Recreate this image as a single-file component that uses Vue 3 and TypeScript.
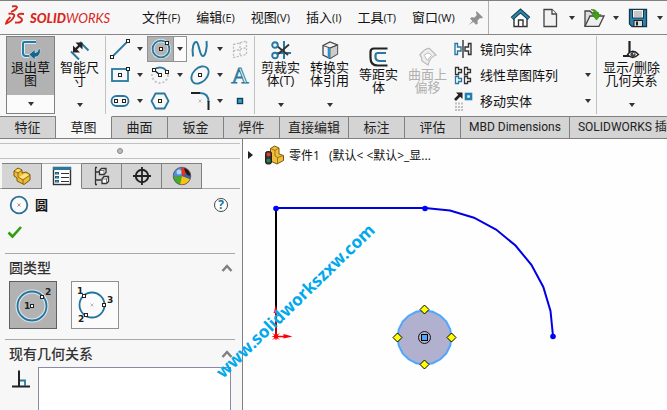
<script setup lang="ts">
import { ref } from 'vue'

type Tool = { icon: string; label: string; drop?: boolean; active?: boolean }
type BigTool = { icon: string; label: string; drop?: boolean; active?: boolean; disabled?: boolean }

const menus = [
  ['文件', 'F'], ['编辑', 'E'], ['视图', 'V'], ['插入', 'I'], ['工具', 'T'], ['窗口', 'W'],
]

const sq = (x: number, y: number) =>
  `<rect x="${x - 1.5}" y="${y - 1.5}" width="3" height="3" fill="#fff" stroke="#222"/>`
const blue = 'stroke="#2878a0" stroke-width="1.8" fill="none"'
const darkThin = 'stroke="#333" stroke-width="1.4" fill="none"'

const icons: Record<string, string> = {
  pin: '<g fill="#909090"><path d="M10.5 3 17 9.500l-1.800.9-1.200-.4-2.500 2.700.2 3-1.600 1L4 10.500l1.600-1.200 3 .2 2.300-2.700-.9-1.600z"/><path d="M7.500 12 2.500 17l6-3.800z"/></g>',
  home: '<path d="M4 10v8.500h13V10l-6.500-6z" fill="#fff" stroke="#333" stroke-width="1.400"/><path d="M8.500 18v-6h4.500v6" fill="#fff" stroke="#333" stroke-width="1.400"/><path d="M2 10.500 10.500 3 19 10.500" fill="none" stroke="#123f55" stroke-width="4"/><path d="M2.300 10.200 10.500 3 18.700 10.200" fill="none" stroke="#2f86ad" stroke-width="2"/>',
  page: '<path d="M4 1.500h8l4.500 4.500v12.500H4z" fill="#f2f2f2" stroke="#444" stroke-width="1.300"/><path d="M12 1.500V6h4.500" fill="#fff" stroke="#444" stroke-width="1.300"/>',
  open: '<path d="M1 18V3h5l2 2h6v4" fill="#ddd" stroke="#444" stroke-width="1.300"/><path d="M1 18.300 6 8h14l-5 10.300z" fill="#eee" stroke="#444" stroke-width="1.300"/><path d="M7 1.500c4-.5 6.500 1.500 7 5h3L12.500 12 8 6.500h3C10.500 4 9.500 2.800 7 1.500z" fill="#3fa510" stroke="#2d7d0a" stroke-width=".6"/>',
  save: '<path d="M1.500 1.500h17v17H4L1.500 16z" fill="#2b84ad" stroke="#16384a" stroke-width="1.300"/><rect x="4.500" y="1.500" width="11" height="8.500" fill="#f4f4f4" stroke="#16384a"/><path d="M6 4h8M6 6h8M6 8h8" stroke="#999"/><rect x="6" y="12.500" width="8.500" height="6" fill="#ddd" stroke="#222"/><rect x="8" y="13.500" width="2" height="4" fill="#222"/>',
  exit: '<path d="M15 2H3.500q-1.500 0-1.500 1.500V13q0 3 3 3h3" fill="none" stroke="#dfeaf0" stroke-width="4"/><path d="M15 2H3.500q-1.500 0-1.500 1.500V13q0 3 3 3h3" fill="none" stroke="#257ba5" stroke-width="2"/><path d="M8 14.500 14 9.500v3.200q3 0 3.500-3.700h2q0 8-5.500 8v3z" fill="#17648c" stroke="#cfe0e8" stroke-width=".6"/>',
  dimension: '<path d="M1 11.500 9 19.500M10 2l8.500 8.500" stroke="#2878a0" stroke-width="2"/><path d="m5 10 5-5" stroke="#222" stroke-width="2.400"/><path d="M3 5.500V12.500h7zM5.500 2.500h7v7z" fill="#222"/>',
  line: `<path d="M2 18 18 2" ${blue}/>${sq(2, 18)}${sq(18, 2)}`,
  circle: `<circle cx="10" cy="10" r="8.400" fill="none" stroke="#dce8ee" stroke-width="3.600"/><circle cx="10" cy="10" r="8.400" ${blue}/>${sq(10, 10)}${sq(16, 4)}`,
  spline: `<path d="M3 17.500C1.500 8 4 2.500 6.500 3s3 13.500 6 14S17.500 8 16.500 2" stroke="#2878a0" stroke-width="2" fill="none"/>`,
  plane: '<path d="M3.500 5.500 16.500 2v13.500L3.500 18.500zM10 3.500v14M3.500 12 16.500 8.500" fill="none" stroke="#bbb" stroke-width="1.300" stroke-dasharray="2 1.500"/>',
  rect: `<rect x="2" y="4" width="16" height="12" ${blue}/>${sq(10, 10)}${sq(18, 4)}`,
  arc: `<circle cx="10" cy="10" r="8" fill="none" stroke="#c4c4c4" stroke-width="2" stroke-dasharray="2 2"/><path d="M4 5A8 8 0 0 1 17 7" stroke="#f7f7f7" stroke-width="4" fill="none"/><path d="M4 5A8 8 0 0 1 17 7" ${blue}/><path d="m4 5 6 5" stroke="#222" stroke-width="1.600"/>${sq(4, 5)}${sq(17, 7)}${sq(10, 10)}`,
  ellipse: `<ellipse cx="10" cy="10" rx="10" ry="7" transform="rotate(-45 10 10)" ${blue}/>${sq(10, 10)}`,
  text: '<text x="10" y="17.500" text-anchor="middle" font-family="Liberation Serif, serif" font-size="24" fill="#f7f7f7" stroke="#2878a0" stroke-width="1">A</text>',
  slot: `<rect x="1.500" y="5" width="17" height="10" rx="5" ${blue}/>${sq(6, 10)}${sq(14, 10)}`,
  polygon: `<path d="M5.500 2.500h9l4 7.500-4 7.500h-9L1.500 10z" ${blue}/>${sq(10, 10)}`,
  fillet: '<path d="M1 2h9" stroke="#222" stroke-width="2"/><path d="M10 2q8.500 0 8.500 9" fill="none" stroke="#2878a0" stroke-width="2"/><path d="M18.500 10v9" stroke="#222" stroke-width="2"/><path d="m8.500 8.500 3 3m0-3-3 3" stroke="#bbb"/>',
  point: '<rect x="7.500" y="7.500" width="5" height="5" fill="#3fa0cc" stroke="#123f55" stroke-width="1.400"/>',
  trim: '<path d="M13 1v18M5 13h15" stroke="#2878a0" stroke-width="2"/><path d="M6 6 17 15M6 15 18 4.500" stroke="#333" stroke-width="1.800"/><circle cx="4" cy="5" r="2.800" fill="none" stroke="#2878a0" stroke-width="1.900"/><circle cx="4" cy="15.500" r="2.800" fill="none" stroke="#2878a0" stroke-width="1.900"/>',
  convert: '<path d="M3 5.500 10 2l7.500 3v9L10 18.500l-7-3.500z" fill="#f2f2f2" stroke="#444" stroke-width="1.300"/><path d="M10 8v10.500l7.500-4.500V5z" fill="#ccc" stroke="#666"/><path d="m3 5.500 7 2.500 7.500-3" fill="none" stroke="#444"/><path d="M8.800 8v10" stroke="#2590c8" stroke-width="2.200"/>',
  offset: '<path d="M18.500 1.500H5q-3.500 0-3.500 3.500v6q0 7.500 7.500 7.500h9.500" fill="none" stroke="#222" stroke-width="2.200"/><path d="M17 6H9q-2.500 0-2.500 2.500V10q0 4 4.500 4h6" fill="none" stroke="#2878a0" stroke-width="2.200"/>',
  surface: '<path d="M2 8q5-7 9.500-6.500L18 8q-6 2-8 10L4 14q0-4-2-6z" fill="#eee" stroke="#bbb" stroke-width="1.300"/><path d="M6 8.500q3-3 5-2.500l2.500 2.500q-3 2-3.500 5L8 12q0-2-2-3.500z" fill="#fff" stroke="#bbb"/>',
  mirror: `<path d="M2 4.500h2.500V8H8v4H4.500v3.500H2z" stroke="#2878a0" stroke-width="1.400" fill="#fff"/><path d="M10 1v18" ${darkThin}/><path d="M18 4.500h-2.500V8H12v4h3.500v3.500H18z" ${darkThin}/>`,
  pattern: '<g fill="#fff" stroke-width="1.300"><path d="M2.500 2.500h3v2h3v3h-3v2h-3zM11.500 2.500h3v2h3v3h-3v2h-3zM11.500 11.500h3v2h3v3h-3v2h-3z" stroke="#333"/><path d="M2.500 11.500h3v2h3v3h-3v2h-3z" stroke="#2878a0"/></g>',
  move: '<path d="M2 9 7 4" stroke="#222" stroke-width="2.600"/><path d="M3 1.500h6.500V8z" fill="#222"/><rect x="13" y="3" width="5" height="5" fill="#fff" stroke="#2080b0" stroke-width="2.600"/><path d="M2 12.500h8M2 16h8M2 19h8" stroke="#c0c0c0" stroke-width="2" stroke-dasharray="2 1"/>',
  relations: '<path d="M7.500 1v15M1 16h7" stroke="#222" stroke-width="2.200"/><path d="M5.500 14.500q5-6.500 11 0-6 6-11 0z" fill="#fff" stroke="#222" stroke-width="1.300"/><circle cx="11" cy="14.500" r="2.600" fill="#444"/><circle cx="11.700" cy="13.800" r=".8" fill="#fff"/>',
  part: '<path d="M2 5 6 2l4 2v3l4-1 4 2.500V14l-6 4.500L5 15V12L2 10z" fill="#eebc38" stroke="#7a5808"/><path d="m2 5 4 2 4-3M6 7v4l5 3 7-5M11 14v4" fill="none" stroke="#7a5808" stroke-width=".8"/><path d="m3 5 3-2 3 1-3 2zM7 11l6-3.500 4 1.500-6 4z" fill="#ffe27a"/>',
  props: '<rect x="1.500" y="1.500" width="17" height="17" fill="#fff" stroke="#333" stroke-width="1.400"/><path d="M1 2.500h18" stroke="#2878a0" stroke-width="3"/><g fill="#7fc0e0" stroke="#1d5f80"><rect x="3.500" y="6.500" width="3" height="1.500"/><rect x="3.500" y="10.500" width="3" height="1.500"/><rect x="3.500" y="14.500" width="3" height="1.500"/></g><path d="M9 7.500h8M9 11.500h8M9 15.500h8" stroke="#333" stroke-width="1.200"/>',
  config: '<path d="M3 1.500h2M3 18.500h2M3.500 2v16M3.500 6h6M3.500 14h6" stroke="#333" stroke-width="1.300" fill="none"/><path d="M7.500 4.500l2-2h4.500v4l-2 2h-4.500zM10 13l2-2.500h4.500v5l-2 2H10z" fill="#fff" stroke="#333" stroke-width="1.300"/><path d="M7.500 4.500h4.500v4m0-4 2-2M10 13h4.500v4.500m0-4.500 2-2.500" fill="none" stroke="#555" stroke-width=".8"/>',
  target: '<circle cx="10" cy="10" r="6.200" fill="none" stroke="#222" stroke-width="2"/><path d="M10 1v18M1 10h18" stroke="#222" stroke-width="1.800"/>',
  appearance: '<circle cx="10" cy="10" r="8.800" fill="#e33223"/><path d="M10 10 1.300 11A8.800 8.800 0 0 1 9 1.300z" fill="#4a90d8"/><path d="M10 10 1.300 11A8.800 8.800 0 0 0 8 18.500z" fill="#3fae2a"/><path d="M10 10 8 18.500A8.800 8.800 0 0 0 18 13z" fill="#f2c517"/><path d="M10 10 18 13A8.800 8.800 0 0 0 18 6z" fill="#3566b0"/><path d="M12 2q5 1 6.500 7-2 2-4-1T12 2z" fill="#1c1c1c"/><circle cx="7" cy="6" r="2.500" fill="#fff" opacity=".6"/><circle cx="10" cy="10" r="8.800" fill="none" stroke="#555" stroke-width=".7"/>',
  circleX: '<circle cx="10" cy="10" r="8.300" fill="#fafafa" stroke="#2a6f95" stroke-width="1.800"/><path d="m8.500 8.500 3 3m0-3-3 3" stroke="#999"/>',
  light: '<path d="m6.500 3.500 4-2.500 4.500 2v6l4.500 1.500v5L13 19l-6.500-3z" fill="#f0be3c" stroke="#7a5808"/><path d="m6.500 3.500 4.500 2 4-2.500M11 5.500V11l2.500 1.500 6-2M13.500 12.500V19" fill="none" stroke="#8a6410" stroke-width=".8"/><rect x="1.500" y="6.500" width="6" height="12.500" rx="2" fill="#333" stroke="#222"/><circle cx="4.500" cy="9.500" r="2" fill="#e33"/><circle cx="4.500" cy="15.500" r="2" fill="#284"/>',
  perp: '<path d="M8 1.500v16M1 17.500h18" stroke="#222" stroke-width="2"/><path d="M9 11.500h5V17" fill="none" stroke="#2878a0" stroke-width="1.800"/>',
}

const quick = [
  { icon: 'home', label: '主页', drop: false },
  { icon: 'page', label: '新建', drop: true },
  { icon: 'open', label: '打开', drop: true },
  { icon: 'save', label: '保存', drop: true },
]

const firstTools: BigTool[] = [
  { icon: 'exit', label: '退出草\n图', drop: true, active: true },
  { icon: 'dimension', label: '智能尺\n寸', drop: true },
]
const sketchTools: Tool[] = [
  { icon: 'line', label: '直线', drop: true },
  { icon: 'circle', label: '圆', drop: true, active: true },
  { icon: 'spline', label: '样条曲线', drop: true },
  { icon: 'plane', label: '基准面' },
  { icon: 'rect', label: '矩形', drop: true },
  { icon: 'arc', label: '圆弧', drop: true },
  { icon: 'ellipse', label: '椭圆', drop: true },
  { icon: 'text', label: '文字' },
  { icon: 'slot', label: '槽口', drop: true },
  { icon: 'polygon', label: '多边形' },
  { icon: 'fillet', label: '圆角', drop: true },
  { icon: 'point', label: '点' },
]
const editTools: BigTool[] = [
  { icon: 'trim', label: '剪裁实\n体(T)', drop: true },
  { icon: 'convert', label: '转换实\n体引用', drop: true },
  { icon: 'offset', label: '等距实\n体' },
  { icon: 'surface', label: '曲面上\n偏移', disabled: true },
]
const rowTools: Tool[] = [
  { icon: 'mirror', label: '镜向实体' },
  { icon: 'pattern', label: '线性草图阵列', drop: true },
  { icon: 'move', label: '移动实体', drop: true },
]
const lastTools: BigTool[] = [{ icon: 'relations', label: '显示/删除\n几何关系', drop: true }]
const groups = { first: firstTools, edit: editTools, last: lastTools }

const tabs = ['特征', '草图', '曲面', '钣金', '焊件', '直接编辑', '标注', '评估', 'MBD Dimensions', 'SOLIDWORKS 插件']
const activeTab = ref('草图')

const panelTabs = [
  { icon: 'part', label: '设计树' },
  { icon: 'props', label: '属性' },
  { icon: 'config', label: '配置' },
  { icon: 'target', label: '尺寸专家' },
  { icon: 'appearance', label: '外观' },
]
const activePanel = ref('props')
const circleType = ref('center')

// Curves are tessellated into straight segments, like the modeller's own display.
const ring = (cx: number, cy: number, r: number, from: number, to: number, n: number) =>
  Array.from({ length: n + 1 }, (_, i) => {
    const a = ((from + ((to - from) * i) / n) * Math.PI) / 180
    return `${(cx + r * Math.sin(a)).toFixed(1)},${(cy - r * Math.cos(a)).toFixed(1)}`
  }).join(' ')
const arcPoints = ring(182, 197, 128, 0, 90, 8)
const circlePoints = ring(181.5, 198.5, 27, 0, 360, 20)
const handles = [[181.5, 170.5], [208.5, 198.5], [181.5, 225.5], [154.5, 198.5]]
</script>

<template>
  <div class="app">
    <header class="menubar">
      <div class="brand" aria-label="SOLIDWORKS">
        <svg class="ds" viewBox="0 0 20 21" fill="none" stroke="#d8261c" stroke-width="1.900">
          <path d="M7 1.500q5-1 5 .8Q11.500 4.500 6 7" />
          <path d="M3.500 8.800Q10.500 8 9 11.500 7 16.500 1 18.500q1-3.500 4.500-6.500" />
          <path d="M19 9q-6-1-6 1.500c0 2 4.500 2 4 4.500-.5 2.500-3 3-7 2.500" />
        </svg>
        <span class="word"><b>SOLID</b><i>WORKS</i></span>
      </div>
      <nav class="menus">
        <button v-for="[name, key] in menus" :key="key" type="button">{{ name }}<small>({{ key }})</small></button>
      </nav>
      <button type="button" class="pin" aria-label="固定"><svg class="icon" viewBox="0 0 20 20" v-html="icons.pin" /></button>
      <div class="quick">
        <template v-for="q in quick" :key="q.icon">
          <button type="button" :aria-label="q.label"><svg class="icon" viewBox="0 0 20 20" v-html="icons[q.icon]" /></button>
          <button v-if="q.drop" type="button" class="more" :aria-label="q.label + '选项'"><i class="caret" /></button>
        </template>
      </div>
    </header>

    <section class="ribbon">
      <template v-for="(list, name) in groups" :key="name">
        <div class="bigs" :class="name">
          <div v-for="t in list" :key="t.icon" class="big" :class="{ active: t.active, nodrop: !t.drop }">
            <button type="button" class="face" :disabled="t.disabled">
              <svg class="icon" viewBox="0 0 20 20" v-html="icons[t.icon]" />
              <span>{{ t.label }}</span>
            </button>
            <button v-if="t.drop" type="button" class="drop" aria-label="选项"><i class="caret" /></button>
          </div>
        </div>
        <div v-if="name === 'first'" class="grid">
          <div v-for="t in sketchTools" :key="t.icon" class="cell" :class="{ active: t.active }">
            <button type="button" class="tool" :aria-label="t.label"><svg class="icon" viewBox="0 0 20 20" v-html="icons[t.icon]" /></button>
            <button v-if="t.drop" type="button" class="arrow" :aria-label="t.label + '选项'"><i class="caret" /></button>
          </div>
        </div>
        <div v-if="name === 'edit'" class="rows">
          <div v-for="t in rowTools" :key="t.icon" class="row">
            <button type="button" class="rowface"><svg class="icon" viewBox="0 0 20 20" v-html="icons[t.icon]" />{{ t.label }}</button>
            <button v-if="t.drop" type="button" class="arrow" :aria-label="t.label + '选项'"><i class="caret" /></button>
          </div>
        </div>
      </template>
    </section>

    <nav class="tabs">
      <button v-for="t in tabs" :key="t" type="button" :class="{ on: t === activeTab }" @click="activeTab = t">{{ t }}</button>
    </nav>

    <main class="main">
      <aside class="panel">
        <div class="grip"><i /></div>
        <div class="ptabs">
          <button v-for="p in panelTabs" :key="p.icon" type="button" :aria-label="p.label" :class="{ on: p.icon === activePanel }" @click="activePanel = p.icon">
            <svg class="icon" viewBox="0 0 20 20" v-html="icons[p.icon]" />
          </button>
        </div>
        <div class="title">
          <svg class="icon" viewBox="0 0 20 20" v-html="icons.circleX" />
          <h1>圆</h1>
          <button type="button" class="help" aria-label="帮助">?</button>
        </div>
        <button type="button" class="ok" aria-label="确定">
          <svg viewBox="0 0 16 14"><path d="M1.500 7.500 5.500 11.500 14 2" fill="none" stroke="#2f9e0c" stroke-width="2.600" /></svg>
        </button>
        <section class="group">
          <h2>圆类型<svg viewBox="0 0 12 8"><path d="m1.500 7 4.500-5 4.500 5" /></svg></h2>
          <div class="types">
            <label :class="{ on: circleType === 'center' }">
              <input v-model="circleType" type="radio" name="circle" value="center" aria-label="圆" />
              <svg viewBox="0 0 46 46">
                <circle cx="22" cy="24" r="14.500" fill="none" stroke="#dde8ee" stroke-width="4" />
                <circle cx="22" cy="24" r="14.500" fill="none" stroke="#26749c" stroke-width="1.800" />
                <g v-html="sq(22, 24) + sq(32, 15)" />
                <text x="14" y="27">1</text><text x="35" y="13">2</text>
              </svg>
            </label>
            <label :class="{ on: circleType === 'perimeter' }">
              <input v-model="circleType" type="radio" name="circle" value="perimeter" aria-label="周边圆" />
              <svg viewBox="0 0 46 46">
                <circle cx="20" cy="23" r="12.500" fill="none" stroke="#26749c" stroke-width="1.800" />
                <path d="m18.500 21.500 3 3m0-3-3 3" stroke="#bbb" />
                <g v-html="sq(12, 14) + sq(32, 23) + sq(14, 33)" />
                <text x="5" y="12">1</text><text x="35" y="21">3</text><text x="6" y="40">2</text>
              </svg>
            </label>
          </div>
        </section>
        <section class="group grow">
          <h2><label for="relations">现有几何关系</label><svg viewBox="0 0 12 8"><path d="m1.500 7 4.500-5 4.500 5" /></svg></h2>
          <div class="relations">
            <svg class="icon" viewBox="0 0 20 20" v-html="icons.perp" />
            <select id="relations" size="4"></select>
          </div>
        </section>
      </aside>

      <section class="canvas">
        <div class="tree">
          <button type="button" aria-label="展开" class="expand" />
          <svg class="icon" viewBox="0 0 20 20" v-html="icons.light" />
          <span>零件1</span><span>(默认&lt;&nbsp;&lt;默认&gt;_显...</span>
        </div>
        <svg class="sketch" width="424" height="271">
          <g fill="none">
            <path d="M33 69v128" stroke="#000" stroke-width="2" />
            <path d="M33 69h149" stroke="#0000e6" stroke-width="2" />
            <polyline :points="arcPoints" stroke="#0000e6" stroke-width="2" />
          </g>
          <g fill="#0000ff"><circle cx="33" cy="69.500" r="2.800" /><circle cx="182" cy="69.500" r="2.800" /><circle cx="310" cy="197.500" r="2.800" /></g>
          <g stroke="#f00" fill="#f00">
            <path d="M33 197v-26M33 197.500h10" stroke-width="1.500" />
            <path d="m33 166-2.500 8h4zM49.500 197.500l-9-2.500v4.500z" stroke="none" />
            <path d="m30 194.500 6 6m0-6-6 6M29.500 197.500h7M33 194v7" />
            <rect x="31" y="195.500" width="4" height="4" stroke="none" />
          </g>
          <polygon :points="circlePoints" fill="#b2b0cf" stroke="#4da6ff" stroke-width="2" />
          <path v-for="[x, y] in handles" :key="`${x}-${y}`" :d="`M${x} ${y - 4.5}l4.500 4.500-4.500 4.500-4.500-4.500z`" fill="#ff0" stroke="#000" />
          <circle cx="181.500" cy="198.500" r="6" fill="none" stroke="#111" />
          <rect x="178.500" y="195.500" width="6" height="6" fill="#4da6ff" stroke="#000" />
        </svg>
      </section>

      <svg class="watermark" width="420" height="270" aria-hidden="true">
        <text x="0" y="0" transform="translate(223 240) rotate(-44)">www.solidworkszxw.com</text>
      </svg>
    </main>
  </div>
</template>

<style>
body { margin: 0; overflow: hidden; }
</style>

<style scoped>
* { box-sizing: border-box; }
.app {
  display: flex;
  flex-direction: column;
  height: 100vh;
  background: #f7f7f7;
  color: #111;
  font: 13px/13px "Open Sans", "Noto Sans CJK SC", sans-serif;
  overflow: hidden;
}
button { border: 0; padding: 0; margin: 0; background: none; color: inherit; font: inherit; }
.icon { display: block; flex: none; width: 20px; height: 20px; overflow: visible; }
.caret { display: block; border: 3px solid transparent; border-top: 4px solid #333; border-bottom: 0; }

.menubar { display: flex; flex: none; align-items: center; height: 35px; border-top: 1px solid #808080; border-bottom: 1px solid #868686; }
.brand { display: flex; flex: none; align-items: center; width: 134px; padding-left: 5px; color: #d8261c; }
.ds { width: 20px; height: 21px; margin-right: 5px; margin-bottom: 4px; }
.word { font: italic 13px/16px Lato, sans-serif; }
.word b { font-weight: 900; }
.menus { display: flex; flex: none; width: 332px; }
.menus button { flex: none; padding: 0 8px; line-height: 20px; white-space: nowrap; }
.menus small { font-size: 11px; }
.pin { flex: none; }
.quick { display: flex; align-items: center; height: 33px; margin-left: 2px; padding-left: 21px; border-left: 1px solid #b0b0b0; }
.quick button { flex: none; }
.quick .more { display: grid; place-items: center; width: 24px; height: 20px; }
.quick button:first-child { margin-right: 10px; }

.ribbon { display: flex; flex: none; height: 81px; padding: 1px 0 2px; overflow: hidden; }
.bigs { display: flex; flex: none; }
.bigs.first { padding-left: 6px; padding-right: 1px; border-right: 1px solid #c0c0c0; }
.bigs.edit { padding-left: 1px; border-left: 1px solid #c0c0c0; }
.bigs.last { border-left: 1px solid #c0c0c0; }
.big { display: flex; flex-direction: column; width: 49px; }
.last .big { width: 69px; }
.face { display: flex; flex-direction: column; align-items: center; height: 59px; padding-top: 4px; }
.face span { padding-top: 1px; white-space: pre; text-align: center; }
.face:disabled { color: #b0b0b0; }
.nodrop .face { padding-top: 11px; }
.drop { display: grid; place-items: center; flex: 1; }
.big.active { border: 1px solid #808080; }
.active .face { background: #b2b2b2; height: 58px; padding-top: 3px; }
.active .drop { background: #fbfbfb; }
.grid { display: grid; flex: none; grid-template-columns: repeat(4, 40px); grid-auto-rows: 26px; width: 148px; padding-left: 1px; }
.cell { display: flex; width: 39px; height: 26px; }
.tool { display: grid; place-items: center; width: 26px; }
.arrow { display: grid; place-items: center; width: 13px; }
.cell.active { border: 1px solid #909090; width: 40px; }
.cell.active .tool { background: #b2b2b2; width: 25px; }
.cell.active .arrow { background: #fbfbfb; border-left: 1px solid #909090; }
.rows { display: grid; flex: none; grid-auto-rows: 26px; width: 144px; }
.row { display: flex; justify-content: space-between; padding-left: 1px; padding-right: 2px; }
.rowface { display: flex; align-items: center; gap: 7px; }

.tabs { display: flex; flex: none; height: 23px; border-bottom: 1px solid #808080; overflow: hidden; }
.tabs button { flex: none; min-width: 56px; padding: 0 14px; background: #d4d4d4; border-top: 1px solid #808080; border-right: 1px solid #808080; white-space: nowrap; color: #222; }
.tabs button:nth-child(n + 6) { padding: 0 8px; }
.tabs button:nth-child(n + 9) { font-family: Roboto, "Noto Sans CJK SC", sans-serif; font-size: 12px; }
.tabs .on { background: #f7f7f7; border-top-color: #f7f7f7; }

.main { position: relative; display: flex; flex: 1; min-height: 0; }
.panel { display: flex; flex: none; flex-direction: column; width: 243px; padding-top: 4px; border-right: 1px solid #808080; }
.grip { display: grid; place-items: center; flex: none; height: 16px; margin-right: 2px; border-top: 1px solid #c0c0c0; border-bottom: 1px solid #c0c0c0; }
.grip i { width: 6px; height: 6px; border: 1px solid #888; border-radius: 50%; background: #bbb; }
.ptabs { display: flex; flex: none; height: 30px; margin-right: 2px; padding: 4px 0 0 2px; box-shadow: inset 0 -1px #a8a8a8; }
.ptabs button { display: grid; place-items: center; width: 40px; background: #d4d4d4; border: 1px solid #808080; border-left: 0; }
.ptabs .on { background: #f7f7f7; border-top-color: #a8a8a8; border-bottom-color: #f7f7f7; }
.title { display: flex; flex: none; align-items: center; height: 32px; padding: 0 14px 0 9px; }
h1 { flex: 1; margin: 0; padding-left: 6px; font-size: 13px; line-height: 20px; font-weight: 700; }
.help { width: 14px; height: 14px; border: 1px solid #444; border-radius: 50%; color: #22709a; font-weight: 700; font-size: 12px; line-height: 12px; background: #fff; }
.ok { width: 16px; height: 14px; margin: 4px 0 14px 7px; flex: none; }
.ok svg { display: block; width: 16px; height: 14px; }
.group { flex: none; margin: 0 7px 0 5px; border-top: 1px solid #a8a8a8; }
h2 { display: flex; align-items: center; justify-content: space-between; margin: 0; height: 27px; padding: 0 2px 0 4px; font-size: 14px; font-weight: 500; color: #333; }
h2 svg { width: 12px; height: 8px; }
h2 path { fill: none; stroke: #808080; stroke-width: 2.500; }
.types { display: flex; gap: 14px; padding: 0 4px 10px; }
.types label { position: relative; width: 48px; height: 48px; border: 1px solid #909090; background: #fbfbfb; }
.types label.on { background: #b2b2b2; border-color: #606060; }
.types input { position: absolute; inset: 0; width: 100%; height: 100%; margin: 0; opacity: 0; }
.types svg { display: block; width: 46px; height: 46px; }
.types text { font: 700 9px "DejaVu Sans", sans-serif; fill: #222; }
.group.grow { display: flex; flex: 1; flex-direction: column; min-height: 0; }
.relations { display: flex; flex: 1; gap: 7px; padding: 0 4px 0 6px; min-height: 0; }
.relations .icon { margin-top: 2px; }
.relations select { flex: 1; height: 80px; border: 1px solid #8a8aa4; border-radius: 0; background: #fff; outline: 0; }

.canvas { position: relative; flex: 1; min-width: 0; overflow: hidden; background: #fefefe; }
.tree { display: flex; align-items: center; gap: 5px; height: 30px; padding: 2px 0 0 5px; font-size: 12px; white-space: nowrap; }
.tree span + span { padding-left: 4px; }
.expand { width: 5px; margin-right: 6px; border: 4px solid transparent; border-left: 5px solid #222; border-right: 0; }
.sketch { position: absolute; top: 0; left: 0; overflow: visible; }
.watermark { position: absolute; top: 0; left: 0; pointer-events: none; overflow: visible; }
.watermark text { font: 700 17px "Noto Sans", sans-serif; fill: #00a8ec; }
</style>
